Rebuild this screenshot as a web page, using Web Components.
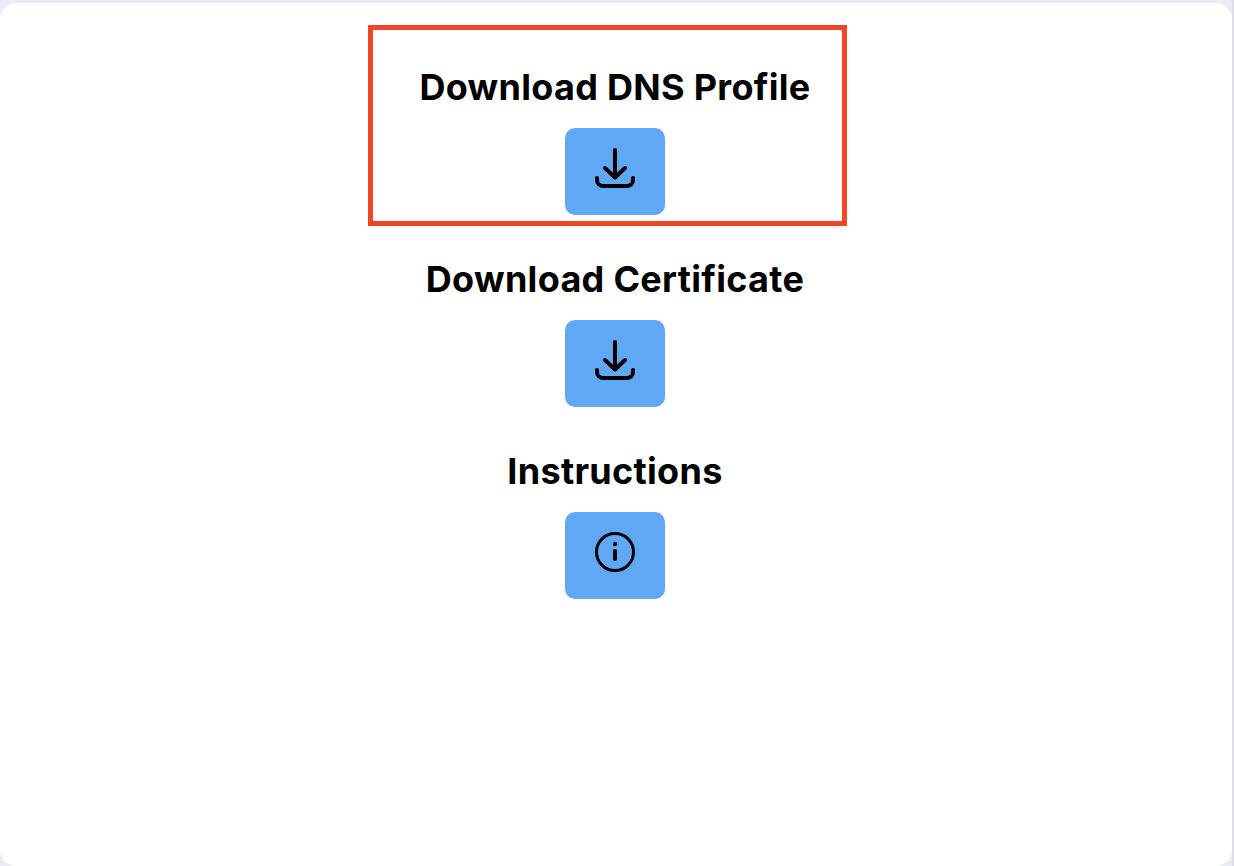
<!DOCTYPE html>
<html>
<head>
<meta charset="utf-8">
<title>Downloads</title>
<style>
  html, body { margin: 0; height: 100%; }
  body {
    background: linear-gradient(to right, #e9ecf4 1232px, #dcdfe9 1232px);
    overflow: hidden;
    font-family: Inter, "Liberation Sans", sans-serif;
  }
</style>
</head>
<body>
<download-card>
  <download-item label="Download DNS Profile" icon="download" marked></download-item>
  <download-item label="Download Certificate" icon="download"></download-item>
  <download-item label="Instructions" icon="info"></download-item>
</download-card>
<script>
const css = String.raw
const html = String.raw

const icons = {
  download: html`<svg viewBox="0 0 40 40" width="40" height="40" fill="none" stroke="currentColor" stroke-width="4" stroke-linecap="round" stroke-linejoin="round">
    <path d="M20 2V29" />
    <path d="M10 20L20 29.5L30 20" />
    <path d="M2 30V32C2 35.5 4.5 38 8.5 38H31.5C35.5 38 38 35.5 38 32V30" />
  </svg>`,
  info: html`<svg viewBox="0 0 40 40" width="40" height="40" fill="none" stroke="currentColor" stroke-width="3" stroke-linecap="round">
    <circle cx="20" cy="20" r="18.5" />
    <path d="M20 19V27" stroke-width="4" />
    <circle cx="20" cy="12" r="2.2" fill="currentColor" stroke="none" />
  </svg>`,
}

class DownloadCard extends HTMLElement {
  constructor() {
    super()
    this.attachShadow({ mode: "open" })
    this.shadowRoot.innerHTML = html`
      <style>
        ${css`
          :host {
            display: flex;
            flex-direction: column;
            align-items: center;
            gap: 42px;
            box-sizing: border-box;
            width: 1232px;
            height: 863px;
            margin-top: 3px;
            padding: 62px 2px 0 0;
            border-radius: 16px;
            background: #fff;
            color: #000;
          }
        `}
      </style>
      <slot></slot>
    `
  }
}
customElements.define("download-card", DownloadCard)

class DownloadItem extends HTMLElement {
  constructor() {
    super()
    this.attachShadow({ mode: "open" })
    const marked = this.hasAttribute("marked")
    this.shadowRoot.innerHTML = html`
      <style>
        ${css`
          :host {
            position: relative;
            display: flex;
            flex-direction: column;
            align-items: center;
            gap: 19px;
          }
          h1 {
            margin: 0;
            font-size: 36px;
            line-height: 44px;
            font-weight: 700;
            letter-spacing: 0.3px;
            white-space: nowrap;
          }
          button {
            display: block;
            box-sizing: border-box;
            width: 100px;
            height: 87px;
            padding: 20px 30px 27px;
            border: 0;
            border-radius: 10px;
            background: #60a8f5;
            color: #000;
          }
          svg { display: block; }
          .mark {
            position: absolute;
            left: 50%;
            top: -40px;
            box-sizing: border-box;
            width: 479px;
            height: 201px;
            margin-left: -247px;
            border: 5px solid #f04526;
            pointer-events: none;
          }
        `}
      </style>
      <h1>${this.getAttribute("label")}</h1>
      <button type="button">${icons[this.getAttribute("icon")]}</button>
      ${marked ? html`<div class="mark"></div>` : ""}
    `
  }
}
customElements.define("download-item", DownloadItem)
</script>
</body>
</html>
